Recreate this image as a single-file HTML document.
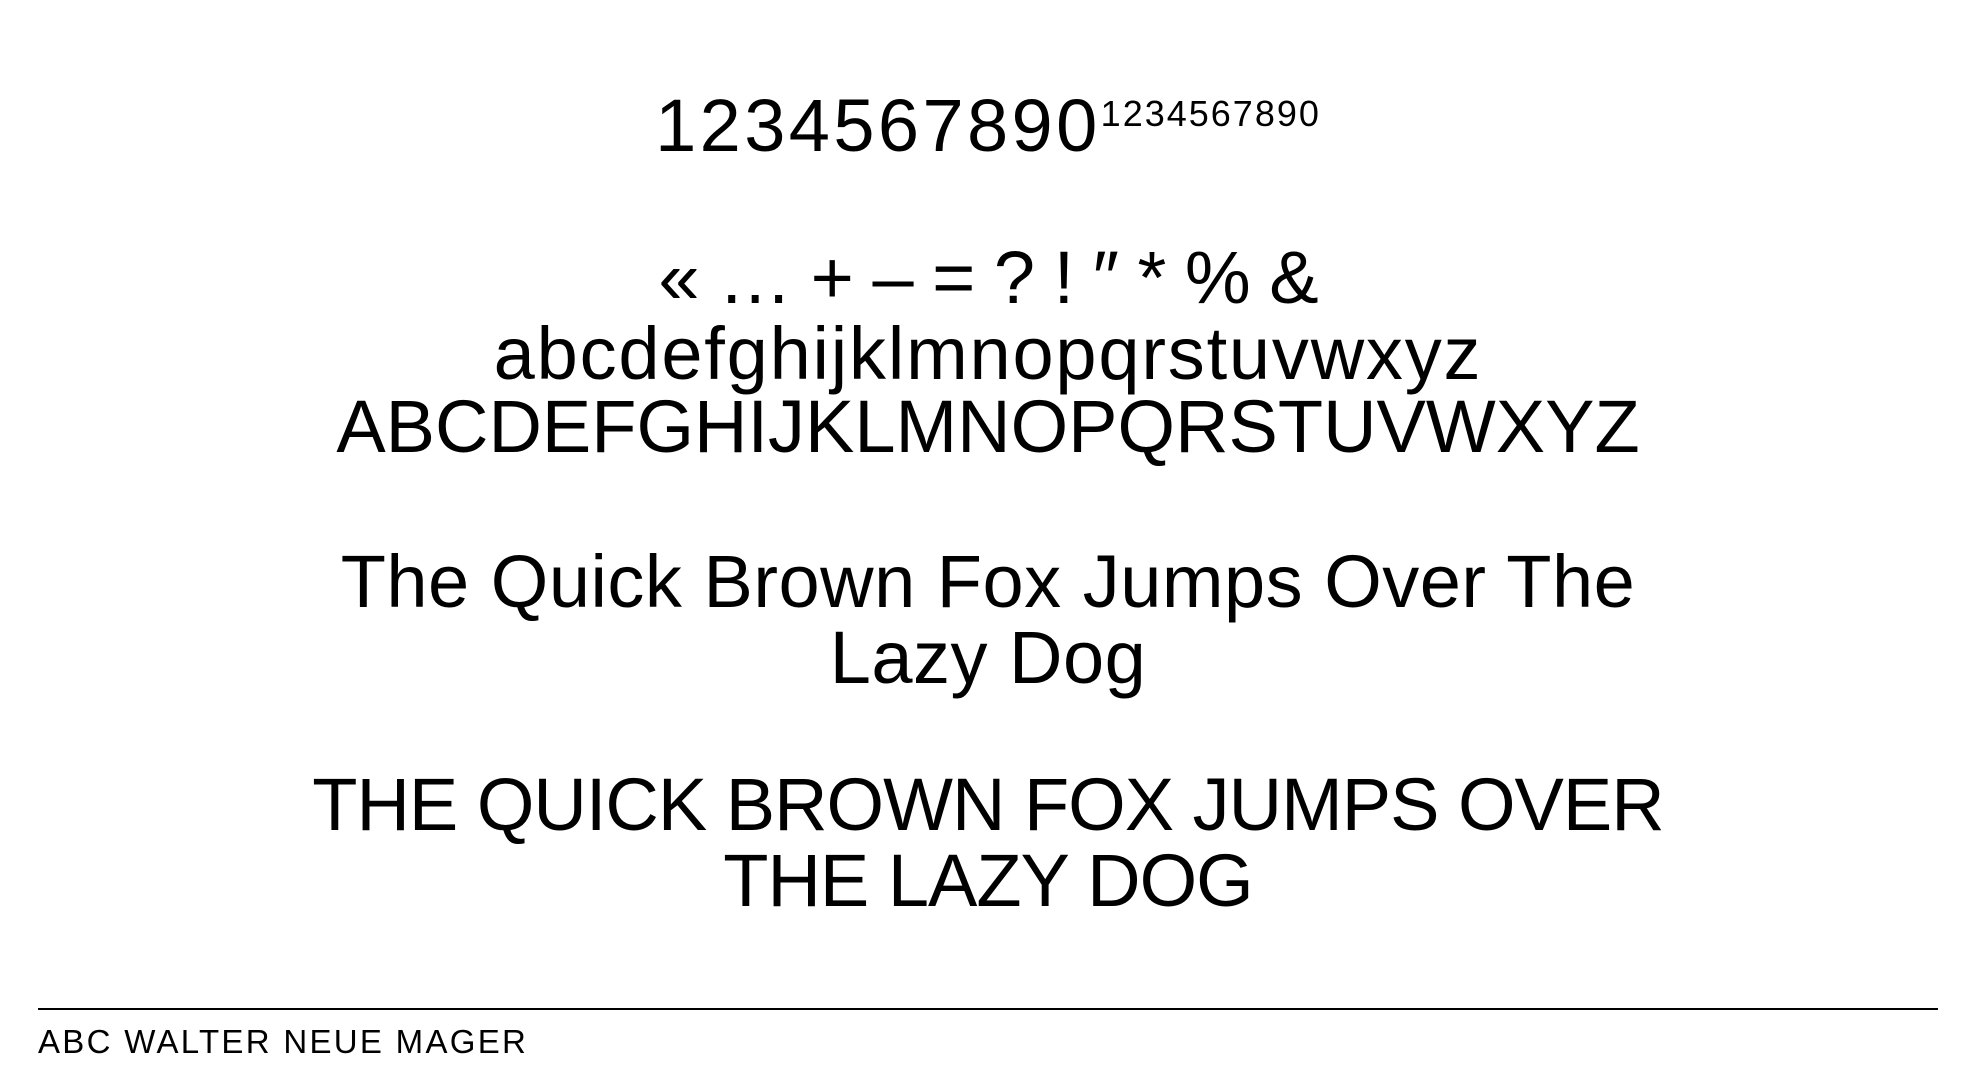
<!DOCTYPE html>
<html><head><meta charset="utf-8"><style>
body{margin:0;width:1976px;height:1088px;background:#fff;position:relative;overflow:hidden;font-family:"Liberation Sans",sans-serif;color:#000}
.l{position:absolute;left:0;width:1976px;text-align:center;font-size:74px;line-height:74px;white-space:nowrap;letter-spacing:-1px}
sup{font-size:36px;vertical-align:top;position:relative;top:-12px;letter-spacing:2px}
.rule{position:absolute;left:38px;width:1900px;top:1008px;height:2px;background:#000}
.ft{position:absolute;left:38px;top:1025px;font-size:33px;line-height:33px;letter-spacing:2.3px}
</style></head><body>
<div class="l" style="top:89px;letter-spacing:3.4px">1234567890<sup>1234567890</sup></div>
<div class="l" style="top:241px">« … + – = ? ! ″ * % &amp;</div>
<div class="l" style="top:317px;letter-spacing:1.8px">abcdefghijklmnopqrstuvwxyz</div>
<div class="l" style="top:390px;letter-spacing:0">ABCDEFGHIJKLMNOPQRSTUVWXYZ</div>
<div class="l" style="top:545px;letter-spacing:0.5px">The Quick Brown Fox Jumps Over The</div>
<div class="l" style="top:621px;letter-spacing:0.5px">Lazy Dog</div>
<div class="l" style="top:768px">THE QUICK BROWN FOX JUMPS OVER</div>
<div class="l" style="top:844px">THE LAZY DOG</div>
<div class="rule"></div>
<div class="ft">ABC WALTER NEUE MAGER</div>
</body></html>
